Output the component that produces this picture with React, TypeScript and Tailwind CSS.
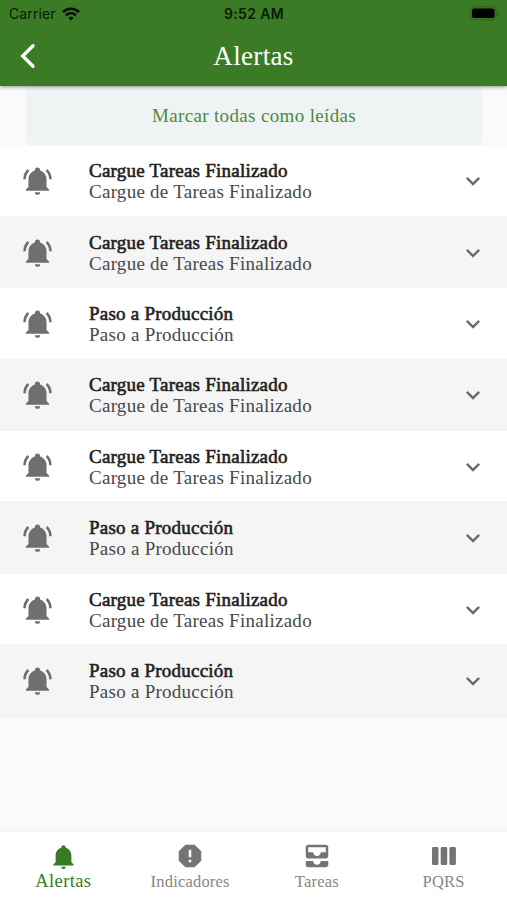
import type { ReactNode } from 'react';
import { MdAllInbox, MdExpandMore } from 'react-icons/md';

const LOAD = { title: 'Cargue Tareas Finalizado', detail: 'Cargue de Tareas Finalizado' };
const PRODUCTION = { title: 'Paso a Producción', detail: 'Paso a Producción' };
const alerts = [LOAD, LOAD, PRODUCTION, LOAD, LOAD, PRODUCTION, LOAD, PRODUCTION];

function Bell({ className, ringing }: { className: string; ringing?: boolean }) {
  return (
    <svg className={className} viewBox="0 0 24 24" fill="currentColor">
      <path d="M21 19v1H3v-1l2-2v-6c0-3.100 2.030-5.830 5-6.710V4a2 2 0 0 1 4 0v.29c2.970.88 5 3.610 5 6.710v6l2 2zM14 21a2 2 0 0 1-4 0z" />
      {ringing && (
        <path d="M19.750 3.190l-1.420 1.420A8.980 8.980 0 0 1 21 11h2c0-2.930-1.160-5.750-3.250-7.810zM1 11h2c0-2.400.96-4.700 2.670-6.390L4.250 3.190A10.960 10.960 0 0 0 1 11z" />
      )}
    </svg>
  );
}

function StatusBar() {
  return (
    <div className="grid h-[27px] grid-cols-3 items-center pl-[9px] pr-[8px] font-[Inter,sans-serif] text-[14px] text-[#0b1a06]">
      <div className="flex items-center gap-[6px]">
        <span className="tracking-[0.1px]">Carrier</span>
        <svg width="18" height="14" viewBox="0 0 18 14" fill="none" stroke="#050a03" strokeWidth="2.6">
          <path d="M1 5.100C5.500.7 12.500.7 17 5.100" />
          <path d="M4 8.300c2.900-2.700 7.100-2.700 10 0" />
          <path d="M9 13.500 6.300 10.800c1.500-1.300 3.900-1.300 5.400 0z" fill="#050a03" stroke="none" />
        </svg>
      </div>
      <span className="text-center font-semibold tracking-[0.35px]">9:52 AM</span>
      <svg className="justify-self-end" width="29" height="15" viewBox="0 0 29 15">
        <rect x="0.500" y="0.800" width="25.500" height="13" rx="4" fill="none" stroke="#2b6117" />
        <rect x="2" y="2.500" width="22.500" height="9.500" rx="2" fill="#000" />
        <path d="M27.300 5.500v4c1.500-.6 1.500-3.400 0-4z" fill="#2b6117" />
      </svg>
    </div>
  );
}

function AlertRow({ title, detail, shaded }: { title: string; detail: string; shaded: boolean }) {
  return (
    <li
      className={`flex h-[71.4px] items-center border-b border-[#f3f3f3] pl-[22px] pr-[20px] ${
        shaded ? 'bg-[#f5f5f5]' : 'bg-white'
      }`}
    >
      <Bell ringing className="size-[31px] shrink-0 text-[#6f6f6f]" />
      <div className="ml-[36px] flex-1 pt-px text-[19px] leading-[21px]">
        <p className="tracking-[0.23px] text-[#222] [-webkit-text-stroke:0.6px_#222]">{title}</p>
        <p className="tracking-[0.26px] text-[#484848]">{detail}</p>
      </div>
      <MdExpandMore className="mt-px size-[28px] text-[#6b6b6b]" />
    </li>
  );
}

function Tab({ icon, label, active }: { icon: ReactNode; label: string; active?: boolean }) {
  return (
    <div
      className={`flex flex-1 flex-col items-center pt-[9px] ${
        active ? 'text-[#377b22] text-[18.5px] tracking-[0.4px]' : 'text-[#747474] text-[16.5px] tracking-[0.2px]'
      }`}
    >
      <span className="flex h-[30px] items-center">{icon}</span>
      <span className={`leading-[20px] ${active ? '' : 'pt-px text-[#868686]'}`}>{label}</span>
    </div>
  );
}

export default function App() {
  return (
    <div className="flex h-[900px] w-[507px] flex-col overflow-hidden bg-[#fafafa] font-['Liberation_Serif',serif]">
      <header className="relative z-10 h-[86px] shrink-0 bg-[#3b7b25] shadow-[0_1px_4px_rgba(0,0,0,0.4)]">
        <StatusBar />
        <div className="grid h-[58px] grid-cols-[60px_1fr_60px] items-center">
          <svg
            className="ml-[18px]"
            width="20"
            height="28"
            viewBox="0 0 20 28"
            fill="none"
            stroke="#fff"
            strokeWidth="3.400"
            strokeLinecap="round"
          >
            <path d="M15 3.700 4.700 14 15 24.300" />
          </svg>
          <h1 className="text-center text-[27px] leading-[32px] tracking-[0.35px] text-white">Alertas</h1>
        </div>
      </header>

      <button className="mx-[26px] h-[59.5px] w-[456px] shrink-0 rounded-b-[5px] bg-[#eff3f4] pt-px text-[19px] tracking-[0.35px] text-[#498b36]">
        Marcar todas como leídas
      </button>

      <ul className="flex-1">
        {alerts.map((alert, i) => (
          <AlertRow key={i} {...alert} shaded={i % 2 === 1} />
        ))}
      </ul>

      <nav className="flex h-[72px] shrink-0 border-t-4 border-[#f6f6f6] bg-white">
        <Tab active icon={<Bell className="size-[27px]" />} label="Alertas" />
        <Tab
          icon={
            <svg className="size-[30px]" viewBox="0 0 24 24" fill="currentColor">
              <path d="M13 13h-2V7h2v6zm0 4h-2v-2h2v2zM15.730 3H8.270L3 8.270v7.460L8.270 21h7.460L21 15.730V8.270L15.730 3z" fillRule="evenodd" />
            </svg>
          }
          label="Indicadores"
        />
        <Tab icon={<MdAllInbox className="size-[30px]" />} label="Tareas" />
        <Tab
          icon={
            <svg width="24" height="18" viewBox="0 0 24 18" fill="currentColor">
              <rect width="6.500" height="18" rx="1.200" />
              <rect x="8.700" width="6.500" height="18" rx="1.200" />
              <rect x="17.400" width="6.500" height="18" rx="1.200" />
            </svg>
          }
          label="PQRS"
        />
      </nav>
    </div>
  );
}
